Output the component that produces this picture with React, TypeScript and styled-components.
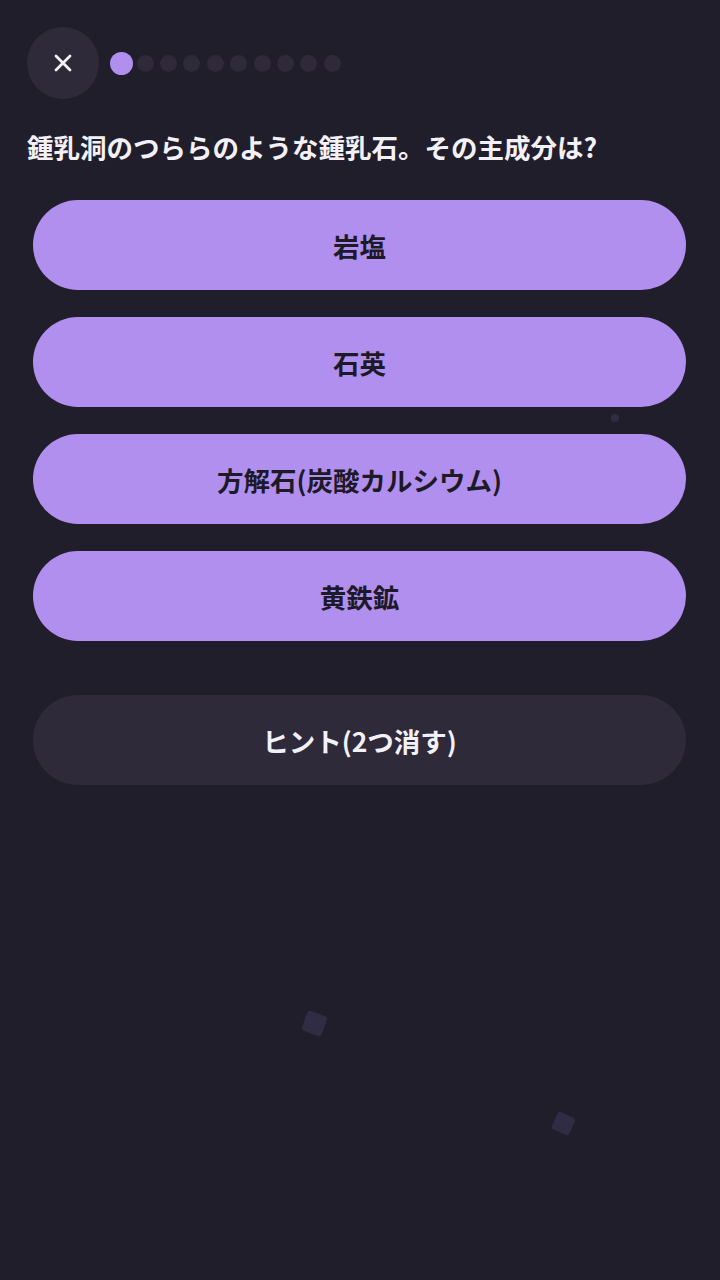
import styled, { createGlobalStyle } from 'styled-components';

const GlobalStyle = createGlobalStyle`
  html, body {
    margin: 0;
    padding: 0;
    background: #211e2b;
  }
  body {
    font-family: "Noto Sans CJK JP", "Noto Sans", sans-serif;
  }
`;

const Screen = styled.div`
  position: relative;
  width: 720px;
  height: 1280px;
  overflow: hidden;
  background: #211e2b;
  box-sizing: border-box;
  padding: 27px 0 0;
`;

const Header = styled.div`
  display: flex;
  align-items: center;
  padding-left: 27px;
`;

const CloseButton = styled.button`
  width: 72px;
  height: 72px;
  border-radius: 50%;
  border: none;
  background: #2e2a3a;
  display: flex;
  align-items: center;
  justify-content: center;
  padding: 0;
  margin-right: 11px;
`;

const Dots = styled.div`
  display: flex;
  align-items: center;
`;

const DotSlot = styled.div`
  width: 23.4px;
  height: 24px;
  display: flex;
  align-items: center;
  justify-content: center;
`;

const Dot = styled.div<{ $active?: boolean }>`
  width: ${(p) => (p.$active ? 23 : 17)}px;
  height: ${(p) => (p.$active ? 23 : 17)}px;
  border-radius: 50%;
  background: ${(p) => (p.$active ? '#b18fef' : '#2e2a3a')};
`;

const Question = styled.h1`
  margin: 30px 0 0;
  padding-left: 27px;
  font-size: 26.5px;
  line-height: 36px;
  font-weight: 700;
  color: #f3f1f7;
`;

const Options = styled.div`
  display: flex;
  flex-direction: column;
  gap: 27px;
  padding: 0 34px 0 33px;
  margin-top: 35px;
`;

const Choice = styled.button<{ $variant?: 'hint' }>`
  height: 90px;
  border: none;
  border-radius: 45px;
  background: ${(p) => (p.$variant === 'hint' ? '#2e2a3a' : '#b18fef')};
  color: ${(p) => (p.$variant === 'hint' ? '#f3f1f7' : '#1d1a27')};
  font-family: "Noto Sans CJK JP", "Noto Sans", sans-serif;
  font-size: 26.5px;
  font-weight: 700;
  display: flex;
  align-items: center;
  justify-content: center;
  padding: 0;
  margin-top: ${(p) => (p.$variant === 'hint' ? 27 : 0)}px;
`;

const Particle = styled.div<{ $size: number; $rot: number }>`
  position: absolute;
  width: ${(p) => p.$size}px;
  height: ${(p) => p.$size}px;
  border-radius: 3px;
  background: #35304a;
  opacity: 0.8;
  transform: rotate(${(p) => p.$rot}deg);
`;

const options = ['岩塩', '石英', '方解石(炭酸カルシウム)', '黄鉄鉱'];

export default function App() {
  return (
    <>
      <GlobalStyle />
      <Screen>
        <Header>
          <CloseButton aria-label="close">
            <svg width="18" height="18" viewBox="0 0 18 18">
              <path d="M2 2 L16 16 M16 2 L2 16" stroke="#f3f1f7" strokeWidth="2.8" strokeLinecap="round" />
            </svg>
          </CloseButton>
          <Dots>
            {Array.from({ length: 10 }).map((_, i) => (
              <DotSlot key={i}>
                <Dot $active={i === 0} />
              </DotSlot>
            ))}
          </Dots>
        </Header>
        <Question>鍾乳洞のつららのような鍾乳石。その主成分は?</Question>
        <Options>
          {options.map((o) => (
            <Choice key={o}>{o}</Choice>
          ))}
          <Choice $variant="hint">ヒント(2つ消す)</Choice>
        </Options>
        <Particle $size={21} $rot={20} style={{ left: 304, top: 1013 }} />
        <Particle $size={19} $rot={25} style={{ left: 554, top: 1114 }} />
        <Particle $size={8} $rot={0} style={{ left: 611, top: 414, borderRadius: '50%' }} />
      </Screen>
    </>
  );
}
